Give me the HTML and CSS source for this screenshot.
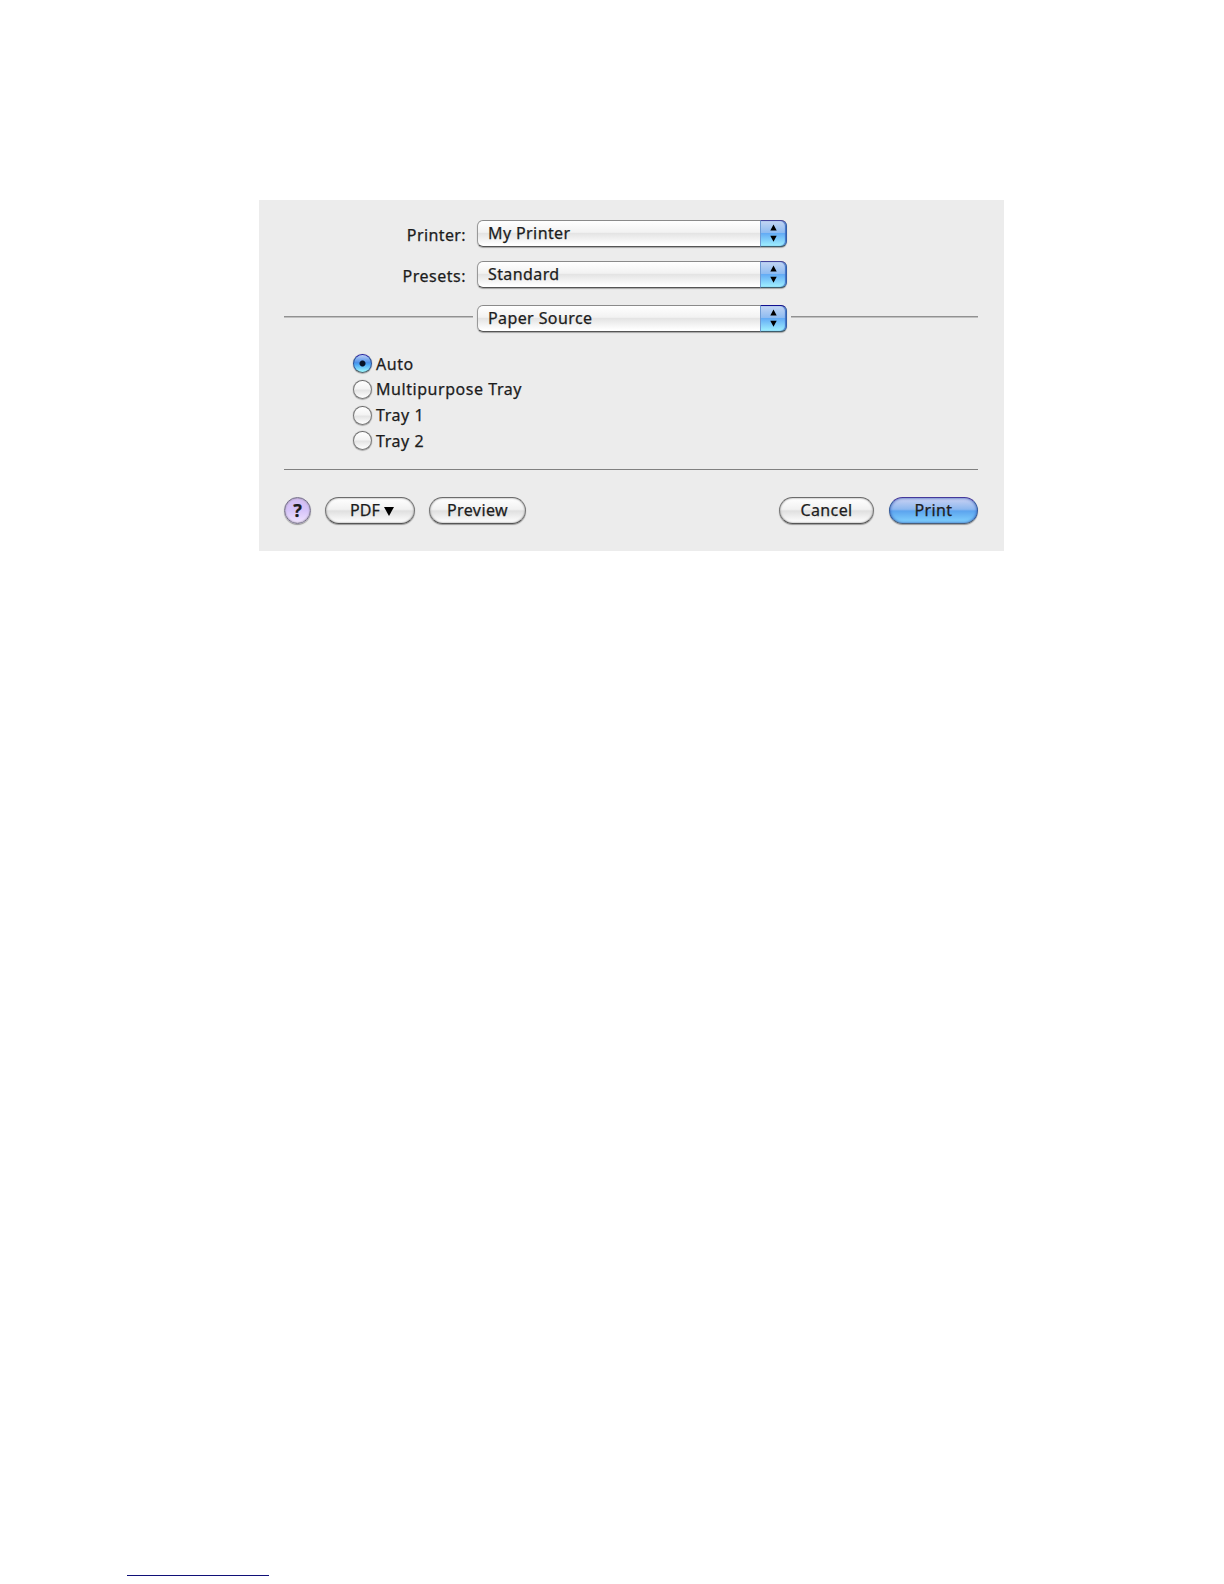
FILE: index.html
```html
<!DOCTYPE html>
<html lang="en">
<head>
  <meta charset="UTF-8">
  <meta name="viewport" content="width=device-width, initial-scale=1.0">
  <title>Print</title>
  <link rel="stylesheet" href="styles.css">
</head>
<body>

  <main class="dialog">
    <div class="row">
      <span class="label">Printer:</span>
      <div class="select">
        <span class="value">My Printer</span>
        <span class="cap"><svg viewBox="0 0 27 27"><path d="M13.5 4.5l3.2 6h-6.4zM13.5 21.8l3.2-6h-6.4z"/></svg></span>
      </div>
    </div>
    <div class="row row-presets">
      <span class="label label-presets">Presets:</span>
      <div class="select">
        <span class="value">Standard</span>
        <span class="cap"><svg viewBox="0 0 27 27"><path d="M13.5 4.5l3.2 6h-6.4zM13.5 21.8l3.2-6h-6.4z"/></svg></span>
      </div>
    </div>
    <div class="row row-pane">
      <span class="line line-left"></span>
      <div class="select">
        <span class="value">Paper Source</span>
        <span class="cap cap-dark"><svg viewBox="0 0 27 27"><path d="M13.5 4.5l3.2 6h-6.4zM13.5 21.8l3.2-6h-6.4z"/></svg></span>
      </div>
      <span class="line line-right"></span>
    </div>

    <div class="options">
      <div class="option"><span class="radio checked"></span><span>Auto</span></div>
      <div class="option"><span class="radio"></span><span>Multipurpose Tray</span></div>
      <div class="option"><span class="radio"></span><span>Tray 1</span></div>
      <div class="option"><span class="radio"></span><span>Tray 2</span></div>
    </div>

    <div class="divider"></div>

    <div class="buttons">
      <span class="help">?</span>
      <span class="btn pdf">PDF <svg class="arrow" viewBox="0 0 10 9"><path d="M0 0h10L5 9z"/></svg></span>
      <span class="btn preview">Preview</span>
      <span class="btn cancel">Cancel</span>
      <span class="btn print">Print</span>
    </div>
  </main>

  <footer class="footer"></footer>

</body>
</html>
```
FILE: styles.css
```css
* {
  box-sizing: border-box;
}

body {
  margin: 0;
  height: 1584px;
  display: flex;
  flex-direction: column;
  background: #fff;
  color: #1c1c1c;
  font-family: "Noto Sans", "Open Sans", sans-serif;
  font-size: 16px;
  line-height: 26px;
  letter-spacing: 0.4px;
  -webkit-text-stroke: 0.25px #1c1c1c;
  white-space: nowrap;
  overflow: hidden;
}

.dialog {
  width: 745px;
  height: 351px;
  margin: 200px 0 0 259px;
  padding: 20px 26px 0 25px;
  background: #ececec;
}

.row {
  display: flex;
  align-items: center;
  height: 27px;
}

.row-presets {
  margin-top: 14px;
}

.row-pane {
  margin-top: 17px;
}

.label {
  width: 193px;
  padding: 2px 11px 0 0;
  text-align: right;
}

.label-presets {
  letter-spacing: 0.5px;
}

.select {
  display: flex;
  justify-content: space-between;
  width: 310px;
  height: 27px;
  border: 1px solid #999;
  border-top-color: #8a8a8a;
  border-bottom-color: #555;
  border-radius: 6px;
  background: linear-gradient(#fff 0%, #f2f2f2 45%, #e4e4e4 50%, #fff 95%);
  box-shadow: 0 1px 1px rgba(0, 0, 0, 0.3);
}

.value {
  padding-left: 10px;
  line-height: 25px;
}

.cap {
  width: 27px;
  height: 27px;
  margin: -1px -1px 0 0;
  border: 1px solid #335fa8;
  border-left: 1px solid #6f9bd4;
  border-top-color: #45459a;
  border-bottom-color: #3d5c6c;
  border-radius: 0 6px 6px 0;
  background: linear-gradient(#c3d5f3 0%, #8fbcf1 46%, #64acf5 50%, #9ff0ff 100%);
  box-shadow: inset -1px 0 1px #3d70c8;
}

.cap-dark {
  border-top-color: #101090;
}

.cap svg {
  display: block;
  width: 27px;
  height: 27px;
  margin: -1px;
}

.line {
  height: 1px;
  margin-top: -4px;
  background: #919191;
  box-shadow: 0 1px 0 #c0c0c0;
}

.line-left {
  width: 189px;
  margin-right: 4px;
}

.line-right {
  flex: 1;
  margin-left: 4px;
}

.options {
  margin: 19px 0 0 69px;
  letter-spacing: 0.55px;
}

.option {
  display: flex;
  align-items: center;
  gap: 4px;
  height: 25.67px;
}

.radio {
  width: 19px;
  height: 19px;
  border: 1.5px solid #777;
  border-top-color: #666;
  border-radius: 50%;
  background: linear-gradient(#fff 0%, #f3f3f3 45%, #e4e4e4 55%, #fff 100%);
  box-shadow: 0 0 1px #888, 0 1px 1px rgba(0, 0, 0, 0.25);
}

.radio.checked {
  border-color: #2020a0 #285098 #49636e;
  background:
    radial-gradient(circle, #061126 0 2.5px, transparent 3.5px),
    linear-gradient(#b9cdf5 0%, #4d90e8 45%, #4ba5f4 55%, #a0faff 100%);
}

.divider {
  height: 1px;
  margin-top: 15px;
  background: #808080;
}

.buttons {
  display: flex;
  align-items: center;
  margin-top: 27px;
}

.help,
.btn {
  height: 27px;
  border: 1px solid #777;
  border-top-color: #6c6c6c;
  border-bottom-color: #555;
  border-radius: 14px;
  text-align: center;
  line-height: 25px;
  box-shadow: 0 1px 1px rgba(0, 0, 0, 0.35), inset 0 0 2px #777;
}

.btn {
  background: linear-gradient(#fff 0%, #f1f1f1 45%, #e0e0e0 52%, #fff 100%);
}

.help {
  width: 27px;
  border-color: #77718c;
  background: linear-gradient(#d3bdf2 0%, #d6c4fa 50%, #f1e5ff 100%);
  font-size: 18px;
  font-weight: 700;
  letter-spacing: 0;
}

.pdf {
  width: 90px;
  margin-left: 14px;
  padding-left: 4px;
  letter-spacing: 0;
}

.arrow {
  width: 10px;
  height: 9px;
}

.preview {
  width: 97px;
  margin-left: 14px;
}

.cancel {
  width: 95px;
  margin-left: auto;
}

.print {
  width: 89px;
  margin-left: 15px;
  border-color: #45399b #345c9c #4b5e78;
  background: linear-gradient(#cbd2f3 0%, #8db8ef 45%, #5ca4ee 52%, #83d4ff 100%);
  box-shadow: 0 1px 1px rgba(0, 0, 0, 0.35), inset 0 0 3px #2d52b0;
}

/* rule at the bottom of the page */
.footer {
  width: 142px;
  height: 1px;
  margin: auto 0 8px 127px;
  background: #101078;
}
```
